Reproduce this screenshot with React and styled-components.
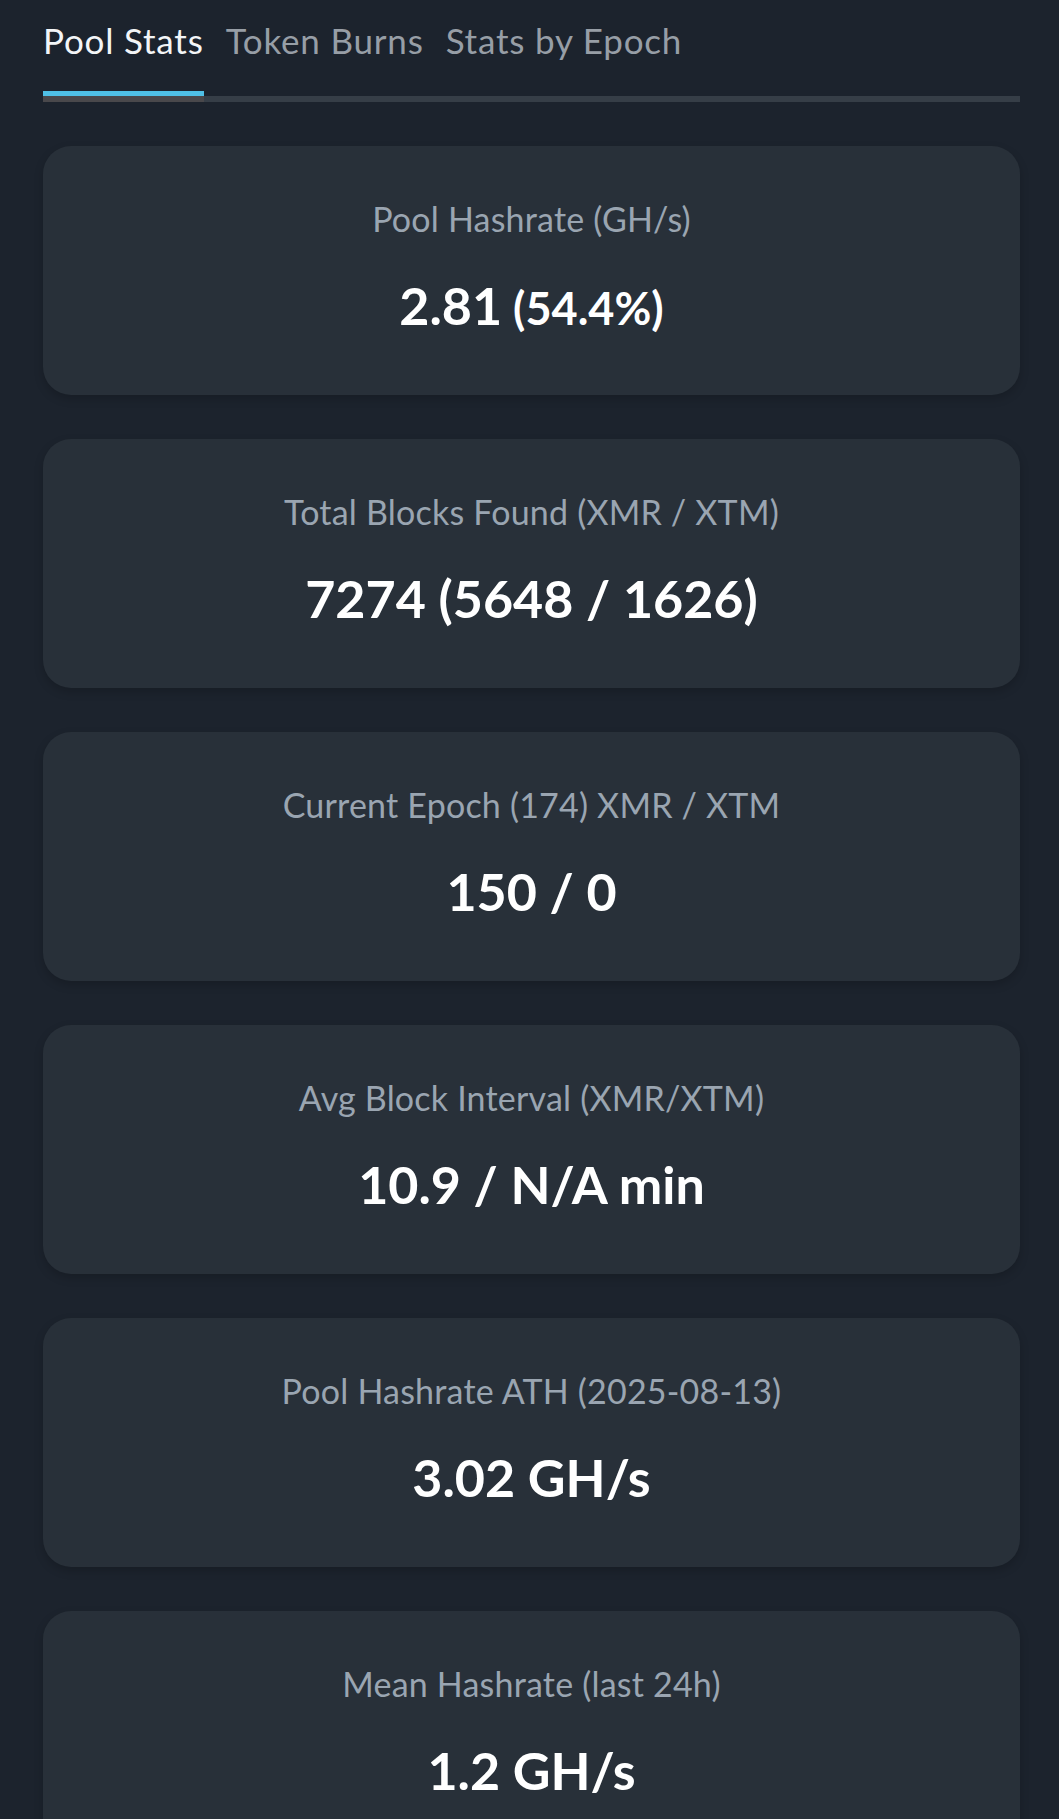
import React from "react";
import styled, { createGlobalStyle } from "styled-components";

const GlobalStyle = createGlobalStyle`
  html, body {
    margin: 0;
    padding: 0;
    background: #1c232d;
  }
  body {
    font-family: Lato, "Open Sans", sans-serif;
    -webkit-font-smoothing: antialiased;
  }
`;

const Page = styled.div`
  min-height: 1819px;
  background: #1c232d;
  padding: 0 39px 40px 43px;
  box-sizing: border-box;
`;

const TabList = styled.div`
  display: flex;
  gap: 22px;
  border-bottom: 6px solid #363e47;
`;

const Tab = styled.div`
  font-size: 35px;
  letter-spacing: 0.8px;
  line-height: 40px;
  padding: 20px 0 36px;
  margin-bottom: -6px;
  color: ${(p) => (p.$active ? "#f3f5f7" : "#979ea6")};
  border-bottom: 6px solid ${(p) => (p.$active ? "#49484b" : "transparent")};
  box-shadow: ${(p) => (p.$active ? "inset 0 -5px 0 #4fc0e6" : "none")};
  white-space: nowrap;
`;

const CardList = styled.div`
  display: flex;
  flex-direction: column;
  gap: 44px;
  padding-top: 44px;
`;

const Card = styled.div`
  background: #283039;
  border-radius: 28px;
  padding: 53px 20px 58px;
  display: flex;
  flex-direction: column;
  align-items: center;
  gap: 35px;
  box-shadow: 0 4px 10px rgba(0, 0, 0, 0.18);
`;

const Label = styled.div`
  font-size: 34px;
  letter-spacing: 0.2px;
  line-height: 40px;
  color: #9aa5b1;
  text-align: center;
`;

const Value = styled.div`
  font-size: 52px;
  line-height: 62px;
  font-weight: 700;
  color: #ffffff;
  text-align: center;
  margin-bottom: 1px;
`;

const Sub = styled.span`
  font-size: 45px;
  line-height: 0;
`;

const stats = [
  { label: "Pool Hashrate (GH/s)", value: "2.81", sub: "(54.4%)" },
  { label: "Total Blocks Found (XMR / XTM)", value: "7274 (5648 / 1626)" },
  { label: "Current Epoch (174) XMR / XTM", value: "150 / 0" },
  { label: "Avg Block Interval (XMR/XTM)", value: "10.9 / N/A min" },
  { label: "Pool Hashrate ATH (2025-08-13)", value: "3.02 GH/s" },
  { label: "Mean Hashrate (last 24h)", value: "1.2 GH/s" },
];

export default function App() {
  return (
    <>
      <GlobalStyle />
      <Page>
        <TabList>
          <Tab $active>Pool Stats</Tab>
          <Tab>Token Burns</Tab>
          <Tab>Stats by Epoch</Tab>
        </TabList>
        <CardList>
          {stats.map((s) => (
            <Card key={s.label}>
              <Label>{s.label}</Label>
              <Value>
                {s.value}
                {s.sub && <Sub> {s.sub}</Sub>}
              </Value>
            </Card>
          ))}
        </CardList>
      </Page>
    </>
  );
}
